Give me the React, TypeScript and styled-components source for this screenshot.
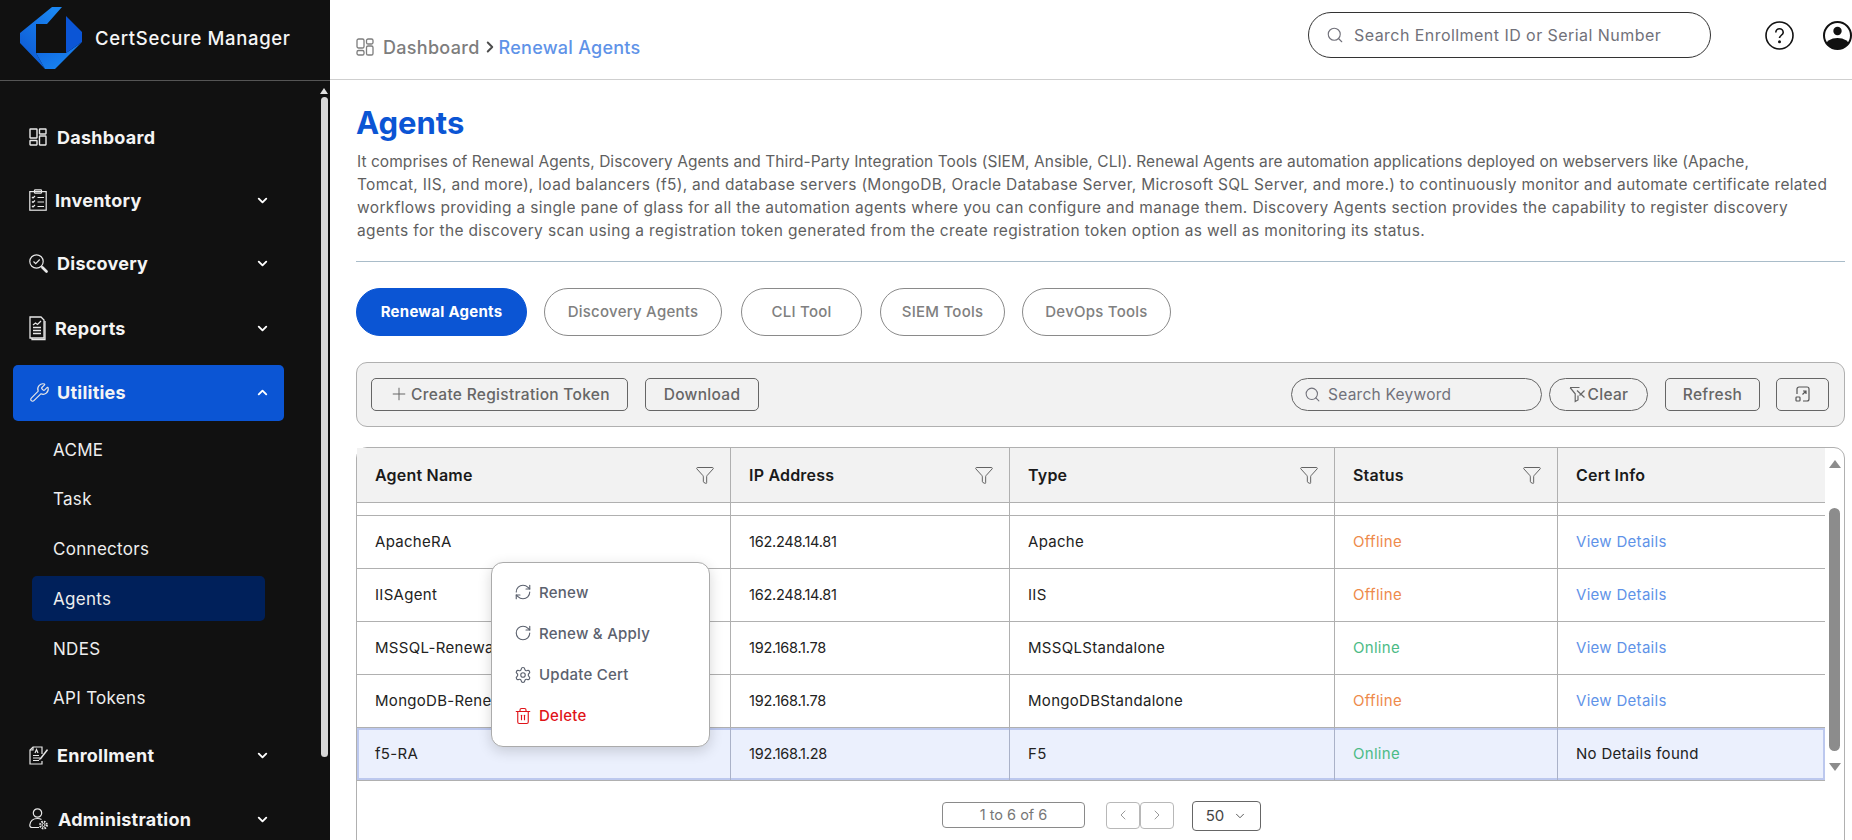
import React from 'react';
import styled, { createGlobalStyle } from 'styled-components';
import {
  ChevronDown, ChevronUp, ChevronLeft, ChevronRight, Search, Plus, Funnel,
  RefreshCw, RotateCw, Settings, Trash2, Wrench,
} from 'lucide-react';

const FONT = `Inter, "Noto Sans", "Liberation Sans", sans-serif`;

const Global = createGlobalStyle`
  html, body { margin: 0; height: 840px; overflow: hidden; background: #fff; }
  body { font-family: ${FONT}; }
  * { box-sizing: border-box; }
`;

const Layout = styled.div`display: flex; width: 1852px; height: 840px; overflow: hidden;`;

const Sidebar = styled.aside`
  width: 330px; flex: none; background: #111111; color: #fff; display: flex; flex-direction: column;
`;
const Brand = styled.div`
  height: 81px; flex: none; border-bottom: 1px solid #555; display: flex; align-items: center;
  padding: 0 0 5px 20px; gap: 13px;
`;
const BrandName = styled.span`font-size: 18.5px; font-weight: 500; letter-spacing: 0.65px; color: #f5f5f5;`;
const SideBody = styled.div`display: flex; flex: 1; min-height: 0;`;
const Nav = styled.nav`
  width: 320px; flex: none; padding: 28px 36px 0 13px; display: flex; flex-direction: column; gap: 8px;
`;
const NavRow = styled.div<{ $active?: boolean; $lift?: number }>`
  height: 56px; flex: none; display: flex; align-items: center; padding: 0 14px ${p => p.$lift ?? 0}px 16px; border-radius: 5px;
  background: ${p => (p.$active ? '#0b55d4' : 'transparent')};
`;
const NavIcon = styled.span<{ $slot: number }>`
  width: ${p => p.$slot}px; flex: none; display: flex; align-items: center; color: #e8e8e8;
`;
const NavLabel = styled.span`flex: 1; font-size: 18px; font-weight: 700; letter-spacing: 0.25px; color: #f4f4f4;`;
const SubList = styled.div`
  display: flex; flex-direction: column; gap: 4.75px; margin: -2px 0 -1px; padding-left: 19px;
`;
const SubItem = styled.div<{ $active?: boolean }>`
  height: 45px; width: 233px; flex: none; display: flex; align-items: center; padding-left: 21px; border-radius: 5px;
  font-size: 17px; font-weight: 400; letter-spacing: 0.3px; color: #eeeeee;
  background: ${p => (p.$active ? '#00205a' : 'transparent')};
`;
const SideScroll = styled.div`
  width: 8px; flex: none; display: flex; flex-direction: column; align-items: center; padding-top: 7px; gap: 3px;
`;
const ArrowUp = styled.div<{ $color: string; $s: number }>`
  width: 0; height: 0; flex: none; border-left: ${p => p.$s}px solid transparent; border-right: ${p => p.$s}px solid transparent;
  border-bottom: ${p => p.$s + 2}px solid ${p => p.$color};
`;
const ArrowDown = styled.div<{ $color: string; $s: number }>`
  width: 0; height: 0; flex: none; border-left: ${p => p.$s}px solid transparent; border-right: ${p => p.$s}px solid transparent;
  border-top: ${p => p.$s + 2}px solid ${p => p.$color};
`;
const SideThumb = styled.div`width: 7px; height: 660px; flex: none; border-radius: 4px; background: #d8d8d8;`;

const Main = styled.main`flex: 1; min-width: 0; display: flex; flex-direction: column;`;
const Header = styled.header`
  height: 80px; flex: none; border-bottom: 1px solid #cfcfcf; display: flex; align-items: flex-start; padding-left: 26px;
`;
const Crumbs = styled.div`
  display: flex; align-items: center; height: 28px; margin-top: 33px; font-size: 18px; font-weight: 500; color: #7d7d7d;
  letter-spacing: 0.3px;
`;
const CrumbIcon = styled.span`display: flex; width: 27px; color: #7d7d7d;`;
const CrumbSep = styled.span`display: flex; margin: 0 0 0 1px; color: #4d4d4d;`;
const CrumbNow = styled.span`color: #5f93e8; letter-spacing: 0.25px;`;
const HeaderSearch = styled.div`
  width: 403px; height: 46px; margin: 12px 0 0 auto; border: 1px solid #333; border-radius: 23px;
  display: flex; align-items: center; padding-left: 17px; gap: 10px; color: #71717a;
  font-size: 16px; letter-spacing: 0.45px;
`;
const HeaderIcons = styled.div`display: flex; gap: 29px; margin: 20px 0 0 54px; height: 30px; align-items: center;`;

const Page = styled.div`flex: 1; min-height: 0; padding: 23px 7px 0 27px; display: flex; flex-direction: column;`;
const Title = styled.h1`
  margin: 0 0 0 -1px; height: 42px; line-height: 40px; font-size: 31px; font-weight: 700; color: #0b55d4; letter-spacing: 0;
`;
const Intro = styled.div`margin: 6.5px 0 0; font-size: 15.5px; line-height: 23px; color: #5f5f5f; white-space: nowrap;`;
const IntroLine = styled.div<{ $ls: number }>`letter-spacing: ${p => p.$ls}px;`;
const Rule = styled.hr`margin: 19px 0 0 -1px; border: 0; border-top: 1px solid #a9bcc9; height: 1px; flex: none;`;
const Tabs = styled.div`display: flex; gap: 17px; margin: 26px 0 0 -1px; flex: none;`;
const Tab = styled.button<{ $w: number; $ml?: number; $active?: boolean }>`
  width: ${p => p.$w}px; margin-left: ${p => p.$ml ?? 0}px; height: 48px; border-radius: 24px; font: inherit; font-size: 15px; cursor: pointer; padding: 0;
  letter-spacing: 0.25px;
  font-weight: ${p => (p.$active ? 700 : 500)};
  color: ${p => (p.$active ? '#fff' : '#808080')};
  background: ${p => (p.$active ? '#0b55d4' : '#fff')};
  border: 1px solid ${p => (p.$active ? '#0b55d4' : '#8a8a8a')};
`;
const Toolbar = styled.div`
  height: 65px; flex: none; margin: 26px 0 0 -1px; border: 1px solid #b0b0b0; border-radius: 11px; background: #f2f2f2;
  display: flex; align-items: center; padding: 0 15px 0 14px;
`;
const ToolButton = styled.button<{ $w: number; $ml?: number }>`
  width: ${p => p.$w}px; height: 33px; margin-left: ${p => p.$ml ?? 0}px; padding: 0; flex: none;
  border: 1px solid #666; border-radius: 5px; background: transparent; cursor: pointer;
  display: flex; align-items: center; justify-content: center; gap: 2px;
  font: inherit; font-size: 15.5px; font-weight: 500; color: #666; letter-spacing: 0.3px;
`;
const KeywordSearch = styled.div`
  width: 251px; height: 33px; margin-left: auto; border: 1px solid #666; border-radius: 17px; flex: none;
  display: flex; align-items: center; padding-left: 12px; gap: 7px; font-size: 15.5px; color: #71717a; letter-spacing: 0.25px;
`;
const ClearPill = styled(ToolButton)`border-radius: 17px;`;

const TableCard = styled.section`
  position: relative; flex: none; height: 420px; margin: 20px 0 0 -1px; border: 1px solid #b0b0b0; border-radius: 11px 11px 0 0;
  display: flex; flex-direction: column;
`;
const TableTop = styled.div`display: flex;`;
const Grid = styled.div`flex: none; width: 1468px;`;
const Row = styled.div<{ $h: number; $head?: boolean; $selected?: boolean }>`
  display: grid; grid-template-columns: 374px 279px 325px 223px 1fr;
  height: ${p => p.$h}px;
  background: ${p => (p.$head ? '#f2f2f2' : p.$selected ? '#ebf0fd' : '#fff')};
  border-bottom: 1px solid #b0b0b0;
  ${p => p.$selected && 'box-shadow: inset 0 0 0 2px #bcc8ee;'}
`;
const HeadCell = styled.div`
  display: flex; align-items: center; justify-content: space-between; padding: 0 15px 0 18px;
  border-right: 1px solid #b0b0b0; font-size: 16px; font-weight: 600; color: #1a1a1a; letter-spacing: 0.2px;
  &:last-child { border-right: 0; }
`;
const Cell = styled.div<{ $tone?: string; $selected?: boolean }>`
  display: flex; align-items: center; padding-left: 18px; font-size: 15px; letter-spacing: 0.3px; min-width: 0; overflow: hidden; white-space: nowrap;
  color: ${p => p.$tone ?? '#222'};
  border-right: 1px solid ${p => (p.$selected ? '#aab2c8' : '#b0b0b0')};
  &:last-child { border-right: 0; }
`;
const IpCell = styled(Cell)`font-size: 14.5px; letter-spacing: -0.25px;`;
const TableScroll = styled.div`
  flex: 1; display: flex; flex-direction: column; align-items: center; padding-top: 12px;
`;
const TableThumb = styled.div`width: 11px; height: 243px; margin: 40px 0 12px; flex: none; border-radius: 6px; background: #8c8c8c;`;
const Pager = styled.div`flex: 1; display: flex; align-items: flex-start; justify-content: center; padding: 21px 0 0 2px;`;
const PageCount = styled.div`
  width: 143px; height: 26px; border: 1px solid #8a8a8a; border-radius: 4px; display: flex; align-items: center; justify-content: center;
  font-size: 14.5px; color: #777;
`;
const PageNav = styled.div`display: flex; margin-left: 21px;`;
const PageStep = styled.div`
  width: 34px; height: 27px; border: 1px solid #b8b8b8; border-radius: 4px; display: flex; align-items: center; justify-content: center; color: #8a8a8a;
`;
const PageSize = styled.div`
  width: 69px; height: 30px; margin: -1px 0 0 18px; border: 1px solid #666; border-radius: 4px; display: flex; align-items: center; justify-content: center;
  gap: 9px; font-size: 15px; color: #444;
`;
const Menu = styled.div`
  position: absolute; left: 134px; top: 114px; width: 219px; height: 185px; background: #fff; border: 1px solid #ababab; border-radius: 12px;
  box-shadow: 0 4px 14px rgba(0,0,0,.16); padding: 9px 0 9px 22px; display: flex; flex-direction: column; justify-content: space-between;
`;
const MenuItem = styled.div<{ $danger?: boolean }>`
  height: 41px; display: flex; align-items: center; gap: 7px; font-size: 15px; font-weight: 500; letter-spacing: 0.25px;
  color: ${p => (p.$danger ? '#e01318' : '#5b616e')};
`;

const Logo = () => (
  <svg width="62" height="62" viewBox="0 0 62 62">
    <defs>
      <linearGradient id="lg1" x1="0" y1="1" x2="0.7" y2="0">
        <stop offset="0" stopColor="#0b52cf" />
        <stop offset="1" stopColor="#1a86f2" />
      </linearGradient>
      <linearGradient id="lg2" x1="0" y1="0" x2="1" y2="1">
        <stop offset="0" stopColor="#0f62e0" />
        <stop offset="1" stopColor="#1b8df2" />
      </linearGradient>
    </defs>
    <polygon points="0,26 32,0 42,0 27,17 16,17 16,46 25,62 0,36" fill="url(#lg1)" />
    <polygon points="16,46 46,46 62,35 35,62 25,62" fill="url(#lg2)" />
    <polygon points="46,9 62,25 62,35 46,46" fill="#0b55d6" />
  </svg>
);

const IconDash = ({ size, rx, sw, color }: { size: number; rx: number; sw: number; color: string }) => (
  <svg width={size} height={size} viewBox="0 0 18 18" fill="none" stroke={color} strokeWidth={sw}>
    <rect x="1" y="1" width="7" height="9" rx={rx} />
    <rect x="10.500" y="1" width="6.500" height="5" rx={rx} />
    <rect x="10.500" y="8" width="6.500" height="9" rx={rx} />
    <rect x="1" y="12.500" width="7" height="4.500" rx={rx} />
  </svg>
);
const IconInventory = () => (
  <svg width="18" height="22" viewBox="0 0 18 22" fill="none" stroke="#e8e8e8" strokeWidth="1.2">
    <rect x="0.800" y="2.600" width="16.400" height="18.600" />
    <rect x="5.500" y="0.800" width="7" height="3.400" rx="0.800" />
    <path d="M3 8l1 1 2-2M3 12.500l1 1 2-2M3 17l1 1 2-2M8.500 8.500H15M8.500 13H15M8.500 17.500H15" />
  </svg>
);
const IconDiscovery = () => (
  <svg width="19" height="19" viewBox="0 0 19 19" fill="none" stroke="#e8e8e8" strokeWidth="1.2">
    <circle cx="7.500" cy="7.500" r="6.700" />
    <path d="M4.500 7.500l2.200 2.200 4-4.200" />
    <path d="M12.300 12.300l1.500 1.500" />
    <path d="M13.500 13.500l4 4" strokeWidth="2.600" strokeLinecap="round" />
  </svg>
);
const IconReports = () => (
  <svg width="18" height="25" viewBox="0 0 18 25" fill="none" stroke="#e8e8e8" strokeWidth="1.3">
    <path d="M16 5v18.500H3V22" />
    <path d="M1 1h11l3 3v18H1z" fill="#111" />
    <path d="M4 9l2.500-2 2 1.500L12 5M4 11.500h8M4 14.500h8M4 17.500h8" />
  </svg>
);
const IconEnrollment = () => (
  <svg width="19" height="19" viewBox="0 0 19 19" fill="none" stroke="#e8e8e8" strokeWidth="1.2">
    <path d="M13 8V1H4L1 4v14h12v-3" />
    <path d="M4 1v3H1M4 12h7M4 14.500h6M4 9.500h6" />
    <path d="M6 7l1.500-3.500L9 7" />
    <path d="M18 3l-7 9-1.500 2 2.500-.8 7-9z" fill="#e8e8e8" stroke="none" />
  </svg>
);
const IconAdmin = () => (
  <svg width="20" height="23" viewBox="0 0 20 23" fill="none" stroke="#e8e8e8" strokeWidth="1.2">
    <circle cx="8.500" cy="5" r="4.200" />
    <path d="M10 19.500H3a2.200 2.200 0 0 1-2.200-2.500c.5-3.500 3-6.500 7.700-6.500 1.500 0 3 .4 4 1.100" />
    <circle cx="14.500" cy="17" r="3.400" strokeWidth="2" strokeDasharray="1.600 1.070" />
    <circle cx="14.500" cy="17" r="1.500" strokeWidth="1" />
  </svg>
);
const IconClear = () => (
  <svg width="17" height="17" viewBox="0 0 17 17" fill="none" stroke="#666" strokeWidth="1.200">
    <path d="M1 1.500h9.500M1 1.500l5.200 6.300v7.700l2.800-1.600V9.500" />
    <path d="M8 4.500l7.500 7M15.500 4.500l-5 5" />
  </svg>
);
const IconExpand = () => (
  <svg width="16" height="16" viewBox="0 0 16 16" fill="none" stroke="#555" strokeWidth="1.200">
    <path d="M2 8V3a2 2 0 0 1 2-2h8a2 2 0 0 1 2 2v10a2 2 0 0 1-2 2H8" />
    <rect x="1" y="11" width="4" height="4" rx="0.800" />
    <path d="M7.500 8.500L11 5M8 5h3v3" />
  </svg>
);
const IconHelp = () => (
  <svg width="29" height="29" viewBox="0 0 29 29" fill="none" stroke="#111" strokeWidth="1.600">
    <circle cx="14.500" cy="14.500" r="13.500" />
    <path d="M10.800 11.500a3.700 3.700 0 0 1 7.400 0c0 2.500-3.700 3-3.700 5.500" />
    <circle cx="14.500" cy="20.800" r="0.700" fill="#111" />
  </svg>
);
const IconUser = () => (
  <svg width="29" height="29" viewBox="0 0 29 29">
    <defs><clipPath id="uc"><circle cx="14.500" cy="14.500" r="13.500" /></clipPath></defs>
    <circle cx="14.500" cy="14.500" r="13.500" fill="#fff" stroke="#111" strokeWidth="2" />
    <circle cx="14.500" cy="10" r="4.200" fill="#111" />
    <ellipse cx="14.500" cy="25" rx="12" ry="8" fill="#111" clipPath="url(#uc)" />
  </svg>
);

const navTop = [
  { label: 'Dashboard', slot: 28, lift: 0, icon: <IconDash size={18} rx={0.4} sw={1.4} color="#e8e8e8" />, chev: false },
  { label: 'Inventory', slot: 26, lift: 2, icon: <IconInventory />, chev: true },
  { label: 'Discovery', slot: 28, lift: 3, icon: <IconDiscovery />, chev: true },
  { label: 'Reports', slot: 26, lift: 2, icon: <IconReports />, chev: true },
];
const subs = ['ACME', 'Task', 'Connectors', 'Agents', 'NDES', 'API Tokens'];
const tabs = [
  { label: 'Renewal Agents', w: 171, ml: 0, active: true },
  { label: 'Discovery Agents', w: 178, ml: 0 },
  { label: 'CLI Tool', w: 121, ml: 2 },
  { label: 'SIEM Tools', w: 125, ml: 1 },
  { label: 'DevOps Tools', w: 149, ml: 0 },
];
const intro = [
  { ls: 0.05, text: 'It comprises of Renewal Agents, Discovery Agents and Third-Party Integration Tools (SIEM, Ansible, CLI). Renewal Agents are automation applications deployed on webservers like (Apache,' },
  { ls: 0.31, text: 'Tomcat, IIS, and more), load balancers (f5), and database servers (MongoDB, Oracle Database Server, Microsoft SQL Server, and more.) to continuously monitor and automate certificate related' },
  { ls: 0.34, text: 'workflows providing a single pane of glass for all the automation agents where you can configure and manage them. Discovery Agents section provides the capability to register discovery' },
  { ls: 0.35, text: 'agents for the discovery scan using a registration token generated from the create registration token option as well as monitoring its status.' },
];
const heads = ['Agent Name', 'IP Address', 'Type', 'Status'];
const GREEN = '#4cbb86';
const ORANGE = '#ee8a4b';
const BLUE = '#5f93e8';
const rows = [
  { name: 'ApacheRA', ip: '162.248.14.81', type: 'Apache', status: 'Offline' },
  { name: 'IISAgent', ip: '162.248.14.81', type: 'IIS', status: 'Offline' },
  { name: 'MSSQL-RenewalAgent', ip: '192.168.1.78', type: 'MSSQLStandalone', status: 'Online' },
  { name: 'MongoDB-RenewalAgent', ip: '192.168.1.78', type: 'MongoDBStandalone', status: 'Offline' },
  { name: 'f5-RA', ip: '192.168.1.28', type: 'F5', status: 'Online', selected: true },
];

export default function App() {
  return (
    <Layout>
      <Global />
      <Sidebar>
        <Brand><Logo /><BrandName>CertSecure Manager</BrandName></Brand>
        <SideBody>
          <Nav>
            {navTop.map(n => (
              <NavRow key={n.label} $lift={n.lift}>
                <NavIcon $slot={n.slot}>{n.icon}</NavIcon>
                <NavLabel>{n.label}</NavLabel>
                {n.chev && <ChevronDown size={15} strokeWidth={3} />}
              </NavRow>
            ))}
            <NavRow $active $lift={2}>
              <NavIcon $slot={28}><Wrench size={21} strokeWidth={1.3} /></NavIcon>
              <NavLabel>Utilities</NavLabel>
              <ChevronUp size={15} strokeWidth={3} />
            </NavRow>
            <SubList>
              {subs.map(s => <SubItem key={s} $active={s === 'Agents'}>{s}</SubItem>)}
            </SubList>
            <NavRow>
              <NavIcon $slot={28}><IconEnrollment /></NavIcon>
              <NavLabel>Enrollment</NavLabel>
              <ChevronDown size={15} strokeWidth={3} />
            </NavRow>
            <NavRow>
              <NavIcon $slot={29}><IconAdmin /></NavIcon>
              <NavLabel>Administration</NavLabel>
              <ChevronDown size={15} strokeWidth={3} />
            </NavRow>
          </Nav>
          <SideScroll>
            <ArrowUp $color="#e0e0e0" $s={4} />
            <SideThumb />
          </SideScroll>
        </SideBody>
      </Sidebar>
      <Main>
        <Header>
          <Crumbs>
            <CrumbIcon><IconDash size={18} rx={1.6} sw={1.3} color="#7d7d7d" /></CrumbIcon>
            Dashboard
            <CrumbSep><ChevronRight size={18} strokeWidth={2.6} /></CrumbSep>
            <CrumbNow>Renewal Agents</CrumbNow>
          </Crumbs>
          <HeaderSearch><Search size={18} strokeWidth={1.5} />Search Enrollment ID or Serial Number</HeaderSearch>
          <HeaderIcons><IconHelp /><IconUser /></HeaderIcons>
        </Header>
        <Page>
          <Title>Agents</Title>
          <Intro>
            {intro.map(l => <IntroLine key={l.text} $ls={l.ls}>{l.text}</IntroLine>)}
          </Intro>
          <Rule />
          <Tabs>
            {tabs.map(t => <Tab key={t.label} $w={t.w} $ml={t.ml} $active={t.active}>{t.label}</Tab>)}
          </Tabs>
          <Toolbar>
            <ToolButton $w={257}><Plus size={20} strokeWidth={1.2} />Create Registration Token</ToolButton>
            <ToolButton $w={114} $ml={17}>Download</ToolButton>
            <KeywordSearch><Search size={17} strokeWidth={1.5} />Search Keyword</KeywordSearch>
            <ClearPill $w={99} $ml={7}><IconClear />Clear</ClearPill>
            <ToolButton $w={95} $ml={17}>Refresh</ToolButton>
            <ToolButton $w={53} $ml={16}><IconExpand /></ToolButton>
          </Toolbar>
          <TableCard>
            <TableTop>
              <Grid>
                <Row $h={55} $head>
                  {heads.map(h => (
                    <HeadCell key={h}>{h}<Funnel size={20} strokeWidth={1.1} color="#555" /></HeadCell>
                  ))}
                  <HeadCell>Cert Info</HeadCell>
                </Row>
                <Row $h={13}>
                  {[0, 1, 2, 3, 4].map(i => <Cell key={i} />)}
                </Row>
                {rows.map(r => (
                  <Row key={r.name} $h={53} $selected={r.selected}>
                    <Cell $selected={r.selected}>{r.name}</Cell>
                    <IpCell $selected={r.selected}>{r.ip}</IpCell>
                    <Cell $selected={r.selected}>{r.type}</Cell>
                    <Cell $selected={r.selected} $tone={r.status === 'Online' ? GREEN : ORANGE}>{r.status}</Cell>
                    {r.selected ? <Cell $selected>No Details found</Cell> : <Cell $tone={BLUE}>View Details</Cell>}
                  </Row>
                ))}
              </Grid>
              <TableScroll>
                <ArrowUp $color="#8c8c8c" $s={6} />
                <TableThumb />
                <ArrowDown $color="#8c8c8c" $s={6} />
              </TableScroll>
            </TableTop>
            <Pager>
              <PageCount>1 to 6 of 6</PageCount>
              <PageNav>
                <PageStep><ChevronLeft size={16} strokeWidth={1.3} /></PageStep>
                <PageStep><ChevronRight size={16} strokeWidth={1.3} /></PageStep>
              </PageNav>
              <PageSize>50<ChevronDown size={14} strokeWidth={1.5} /></PageSize>
            </Pager>
            <Menu>
              <MenuItem><RefreshCw size={18} strokeWidth={1.5} />Renew</MenuItem>
              <MenuItem><RotateCw size={18} strokeWidth={1.5} />Renew &amp; Apply</MenuItem>
              <MenuItem><Settings size={18} strokeWidth={1.5} />Update Cert</MenuItem>
              <MenuItem $danger><Trash2 size={18} strokeWidth={1.5} />Delete</MenuItem>
            </Menu>
          </TableCard>
        </Page>
      </Main>
    </Layout>
  );
}
